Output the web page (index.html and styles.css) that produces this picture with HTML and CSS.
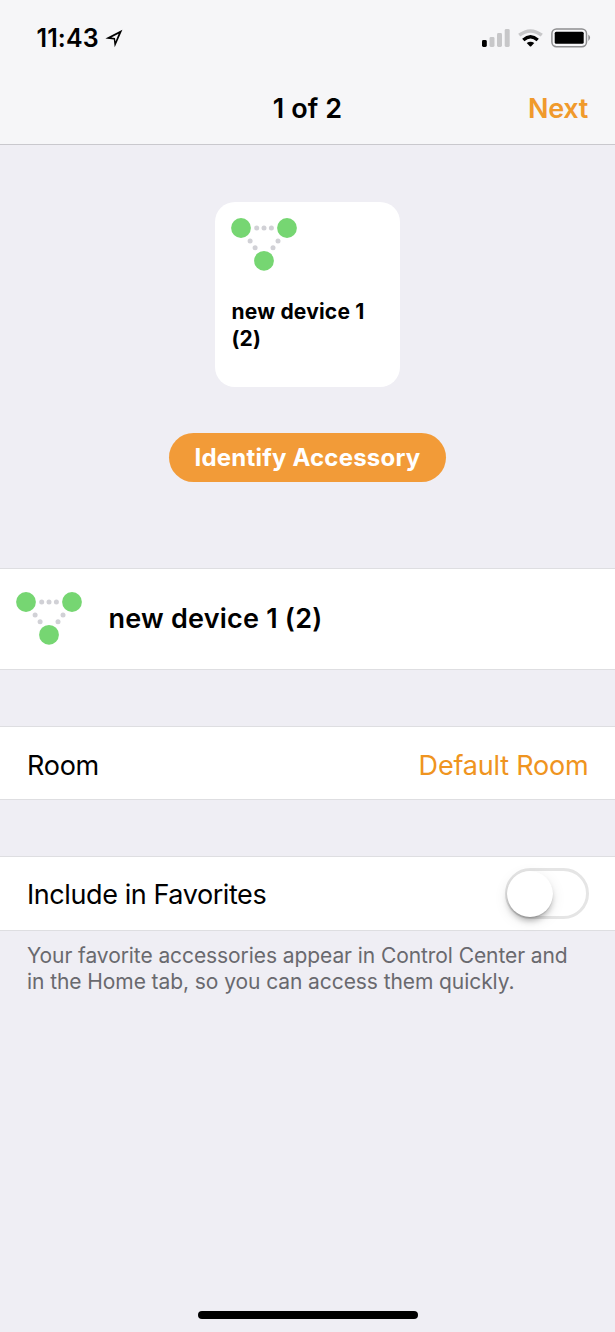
FILE: index.html
```html
<!DOCTYPE html>
<html lang="en">
<head>
<meta charset="utf-8">
<title>Add Accessory</title>
<link rel="stylesheet" href="styles.css">
</head>
<body>
<svg class="defs" width="0" height="0" aria-hidden="true">
  <symbol id="bridge" viewBox="0 0 66 53">
    <g fill="#76d672"><circle cx="10" cy="10" r="9.9"/><circle cx="56" cy="10" r="9.9"/><circle cx="33" cy="42.8" r="9.9"/></g>
    <g fill="#d1d1d6"><circle cx="25.7" cy="10" r="2.5"/><circle cx="33" cy="10" r="2.5"/><circle cx="40.4" cy="10" r="2.5"/><circle cx="19.1" cy="23" r="2.5"/><circle cx="24.1" cy="29.7" r="2.5"/><circle cx="47" cy="23" r="2.5"/><circle cx="42" cy="29.7" r="2.5"/></g>
  </symbol>
</svg>
<div class="screen">
  <header class="header">
    <div class="status">
      <div class="clock"><span class="time">11:43</span>
        <svg class="location" width="18" height="19" viewBox="0 0 18 19"><path fill="#000" fill-rule="evenodd" d="M17.4.8 9.7 18.3 8.8 10.4.4 9.5ZM13.6 4.7 6.3 8.6 10 9.1 10.5 12.6Z"/></svg>
      </div>
      <div class="indicators">
        <svg width="28" height="18" viewBox="0 0 28 18"><rect x="0" y="11" width="4.8" height="7" rx="1.4"/><g fill="#c7c7c9"><rect x="7.5" y="8" width="5" height="10" rx="1.4"/><rect x="15" y="4" width="5" height="14" rx="1.4"/><rect x="22.7" y="0" width="5" height="18" rx="1.4"/></g></svg>
        <svg width="25" height="19" viewBox="0 0 25 19"><g fill="none" stroke-width="3.4"><path stroke="#c7c7c9" d="M1.2 6.2Q12.5-2.4 23.8 6.2"/><path stroke="#000" d="M5.3 10.9Q12.5 4.5 19.7 10.9"/></g><path d="M8.7 14.1Q12.5 11.2 16.3 14.1L13.2 17.3Q12.5 17.9 11.8 17.3Z"/></svg>
        <svg width="41" height="20" viewBox="0 0 41 20"><rect x=".9" y=".9" width="34.6" height="17.8" rx="4.6" fill="none" stroke="#8e8e90" stroke-width="1.5"/><rect x="3.7" y="3.8" width="29" height="12" rx="1.5"/><path fill="#8e8e90" d="M37.3 6.6Q41 9.8 37.3 13Z"/></svg>
      </div>
    </div>
    <nav class="nav"><span></span><h1 class="nav-title">1 of 2</h1><a class="next">Next</a></nav>
  </header>
  <section class="preview">
    <div class="tile"><svg class="bridge"><use href="#bridge"/></svg><div class="tile-name">new device 1<br>(2)</div></div>
    <button class="identify">Identify Accessory</button>
  </section>
  <section class="row name-row"><svg class="bridge"><use href="#bridge"/></svg><span class="name">new device 1 (2)</span></section>
  <section class="row room-row"><span class="room-label">Room</span><span class="room-value">Default Room</span></section>
  <section class="row favorite-row"><span class="favorite-label">Include in Favorites</span><span class="switch"><span class="knob"></span></span></section>
  <p class="note">Your favorite accessories appear in Control Center and<br>in the Home tab, so you can access them quickly.</p>
  <div class="home-indicator"></div>
</div>
</body>
</html>
```

FILE: styles.css
```css
* { box-sizing: border-box; }
body { margin: 0; background: #efeef4; color: #000; font-family: Inter, "Liberation Sans", sans-serif; }
.defs { position: absolute; }
svg { display: block; flex: none; }
.screen { width: 615px; height: 1332px; display: flex; flex-direction: column; background: #efeef4; overflow: hidden; }
.header { height: 145px; background: #f6f6f8; border-bottom: 1px solid #c9c8cd; }
.status { height: 72px; padding: 4px 23px 0 36.5px; display: flex; justify-content: space-between; align-items: center; }
.clock { display: flex; align-items: center; gap: 6px; }
.time { font-size: 25px; line-height: 30px; font-weight: 590; letter-spacing: 0.1px; }
.indicators { display: flex; align-items: center; gap: 8px; }
.nav { height: 72px; padding: 2px 27px 0; display: grid; grid-template-columns: 1fr auto 1fr; align-items: center; }
.nav-title { margin: 0; font-size: 27px; line-height: 34px; font-weight: 590; letter-spacing: 0.1px; }
.next { justify-self: end; color: #f09a2c; font-size: 27px; line-height: 34px; font-weight: 590; letter-spacing: -0.3px; }
.preview { height: 423px; padding-top: 57px; display: flex; flex-direction: column; align-items: center; gap: 46px; }
.tile { width: 185px; height: 185px; padding: 16px; border-radius: 20px; background: #fff; }
.bridge { width: 66px; height: 53px; }
.tile-name { margin: 28px 0 0 0.5px; font-size: 21px; line-height: 26.5px; font-weight: 650; letter-spacing: 0.2px; white-space: nowrap; }
.identify { width: 277px; height: 49px; padding: 0; border: 0; border-radius: 25px; background: #f29b38; color: #fff; font: 650 24px/49px Inter, "Liberation Sans", sans-serif; letter-spacing: 0.2px; white-space: nowrap; }
.row { display: flex; align-items: center; background: #fff; border: solid #dedee1; border-width: 1px 0; white-space: nowrap; }
.name-row { height: 102px; padding: 0 0 1px 16px; gap: 26.5px; }
.name { font-size: 27px; font-weight: 640; line-height: 34px; letter-spacing: 0.22px; padding-top: 1px; }
.room-row { height: 74px; margin-top: 56px; padding: 4px 27px 0; justify-content: space-between; font-size: 27px; }
.room-label { letter-spacing: -0.25px; }
.room-value { color: #ef9420; letter-spacing: -0.2px; margin-right: -0.5px; }
.favorite-row { height: 75px; margin-top: 56px; padding: 0 27px; justify-content: space-between; font-size: 27px; }
.favorite-label { padding-top: 2px; letter-spacing: -0.42px; }
.switch { width: 84px; height: 51px; margin-right: -1px; border: 3px solid #e5e5e5; border-radius: 26px; }
.knob { display: block; width: 46px; height: 46px; margin: -0.5px 0 0 -1px; border-radius: 50%; background: #fff; box-shadow: 0 5px 6px -2px rgba(0,0,0,.3), 0 4px 14px rgba(0,0,0,.1), 0 1px 1px rgba(0,0,0,.1); }
.note { margin: 12px 27px 0; color: #69696e; font-size: 21px; line-height: 26px; letter-spacing: -0.08px; white-space: nowrap; }
.home-indicator { width: 220px; height: 8px; margin: auto auto 13px; border-radius: 4px; background: #000; }
```
